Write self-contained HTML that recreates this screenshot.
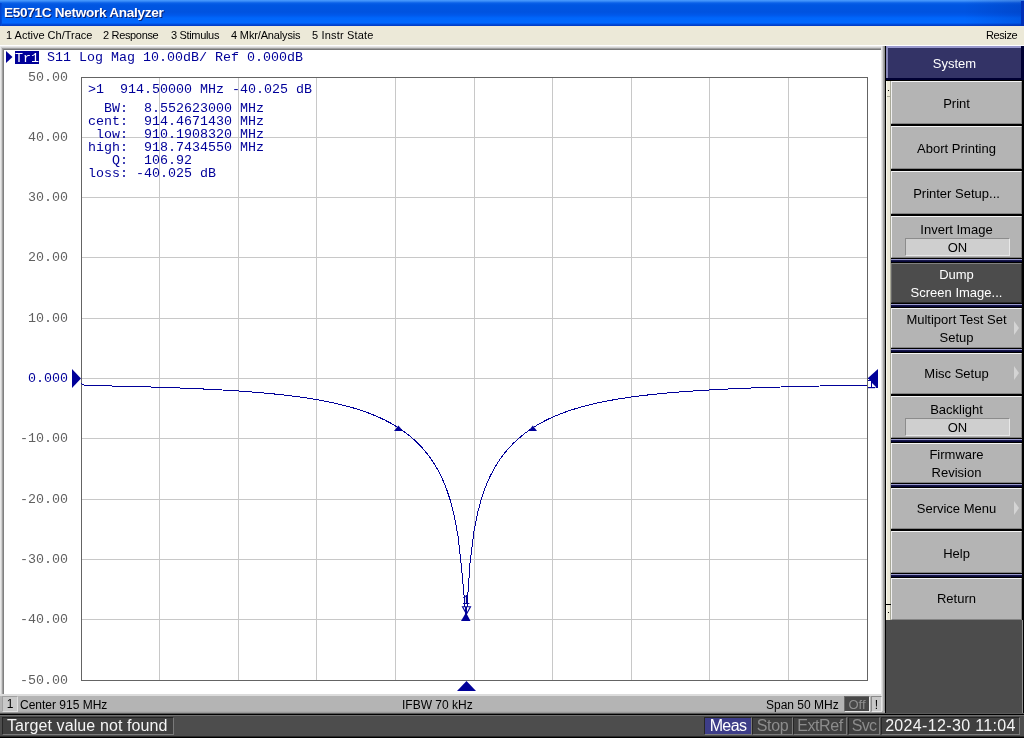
<!DOCTYPE html>
<html><head><meta charset="utf-8">
<style>
*{margin:0;padding:0;box-sizing:border-box}
html,body{width:1024px;height:738px;overflow:hidden;background:#000}
body{position:relative;font-family:"Liberation Sans",sans-serif}
.a{position:absolute}
.g{will-change:transform}
#title{left:0;top:0;width:1024px;height:26px;
background:linear-gradient(to bottom,#4a9bff 0px,#3d8ff8 1px,#0a60e8 3px,#0056e2 5px,#0053e0 12px,#0058ea 15px,#0066fb 18px,#0068ff 23px,#0050e0 24px,#0038c0 26px)}
#title span{position:absolute;left:4px;top:5px;color:#fff;font-weight:bold;font-size:13.6px;letter-spacing:-0.3px;line-height:16px;text-shadow:1px 1px 0 #0a1e6e}
#menu{left:0;top:26px;width:1024px;height:19px;background:#ece9d8;font-size:11px;color:#000}
#menu span{position:absolute;top:3px;line-height:13px;white-space:nowrap}
.sk{position:absolute;left:891px;width:131px;background:#b4b4b4;
 border-top:1px solid #f4f4f4;border-left:1px solid #f0f0f0;border-right:1px solid #848484;border-bottom:1px solid #848484}
.st{position:absolute;left:891px;width:131px;text-align:center;white-space:nowrap;font-size:13px;line-height:16px;color:#000}
.on{position:absolute;left:905px;width:105px;height:18px;background:#cfcfcf;border-top:1px solid #8c8c8c;border-left:1px solid #8c8c8c;border-right:1px solid #e8e8e8;border-bottom:1px solid #e8e8e8;font-size:13px;line-height:17px;text-align:center;color:#000}
.arr{position:absolute;left:1014px;width:0;height:0;border-top:7px solid transparent;border-bottom:7px solid transparent;border-left:5px solid #d4d4d4}
.nsep{position:absolute;left:891px;width:131px;height:5px;background:linear-gradient(to bottom,#000 0,#000 1px,#9999cc 1px,#9999cc 2px,#202050 2px,#000033 4px,#000 4px)}
svg text{font-family:"Liberation Mono",monospace;font-size:13.33px}
.bb{position:absolute;top:717px;height:18px;border-top:1px solid #262626;border-left:1px solid #262626;border-right:1px solid #7a7a7a;border-bottom:1px solid #7a7a7a;background:#404040;color:#8c8c8c;font-size:16px;line-height:16px;white-space:nowrap;text-align:center}
</style></head><body>
<div id="title" class="a"><div class="a" style="left:964px;top:0;width:60px;height:26px;background:linear-gradient(to right,rgba(0,20,120,0) 0,rgba(0,20,120,0.18) 100%)"></div><div class="a" style="left:1021px;top:1px;width:3px;height:25px;background:#0030b8"></div><div class="a" style="left:0;top:3px;width:2px;height:23px;background:linear-gradient(to right,#0040c8,#0050e0)"></div><span class="g">E5071C Network Analyzer</span></div>
<div id="menu" class="a g">
<span style="left:6px">1 Active Ch/Trace</span>
<span style="left:103px;letter-spacing:-0.33px">2 Response</span>
<span style="left:171px;letter-spacing:-0.33px">3 Stimulus</span>
<span style="left:231px;letter-spacing:-0.15px">4 Mkr/Analysis</span>
<span style="left:312px;letter-spacing:0.17px">5 Instr State</span>
<span style="left:986px;letter-spacing:-0.4px">Resize</span>
</div>
<!-- chart panel -->
<div class="a" style="left:0;top:45px;width:885px;height:668px;background:#fff"></div>
<!-- frame -->
<div class="a" style="left:0;top:45px;width:885px;height:1px;background:#fff"></div>
<div class="a" style="left:0;top:46px;width:885px;height:1px;background:#e6e6e6"></div>
<div class="a" style="left:1px;top:47px;width:882px;height:1px;background:#d0d0d0"></div>
<div class="a" style="left:2px;top:48px;width:880px;height:1px;background:#a0a0a0"></div>
<div class="a" style="left:3px;top:49px;width:878px;height:1px;background:#787878"></div>
<div class="a" style="left:0;top:46px;width:1px;height:650px;background:#e8e8e8"></div>
<div class="a" style="left:1px;top:47px;width:1px;height:649px;background:#d0d0d0"></div>
<div class="a" style="left:2px;top:48px;width:1px;height:648px;background:#a0a0a0"></div>
<div class="a" style="left:3px;top:49px;width:1px;height:646px;background:#808080"></div>
<div class="a" style="left:881px;top:46px;width:1px;height:667px;background:#e8e8e8"></div>
<div class="a" style="left:882px;top:46px;width:1px;height:667px;background:#d0d0d0"></div>
<div class="a" style="left:883px;top:46px;width:1px;height:667px;background:#a8a8a8"></div>
<div class="a" style="left:884px;top:46px;width:1px;height:667px;background:#909090"></div>
<div class="a" style="left:0;top:694px;width:881px;height:2px;background:#dcdcdc"></div>
<!-- status bar -->
<div class="a" style="left:0;top:696px;width:881px;height:16px;background:#b4b4b4"></div>
<div class="a" style="left:0;top:711px;width:885px;height:1px;background:#adadad"></div><div class="a" style="left:0;top:712px;width:885px;height:1px;background:#9a9a9a"></div>
<div class="a g" style="left:2px;top:696px;width:16px;height:16px;background:#c8c8c8;border-top:1px solid #a0a0a0;border-left:1px solid #a0a0a0;border-right:1px solid #e0e0e0;border-bottom:1px solid #e0e0e0;font-size:12px;line-height:15px;text-align:center">1</div>
<div class="a g" style="left:20px;top:698px;font-size:12px;line-height:14px">Center 915 MHz</div>
<div class="a g" style="left:402px;top:698px;font-size:12px;line-height:14px">IFBW 70 kHz</div>
<div class="a g" style="left:766px;top:698px;font-size:12px;line-height:14px">Span 50 MHz</div>
<div class="a g" style="left:844px;top:696px;width:26px;height:16px;background:#484848;color:#909090;font-size:13px;line-height:16px;text-align:center;border-top:1px solid #6a6a6a;border-left:1px solid #6a6a6a;border-right:1px solid #e8e8e8;border-bottom:1px solid #e8e8e8">Off</div>
<div class="a g" style="left:871px;top:696px;width:11px;height:16px;background:#c8c8c8;color:#000;font-size:12px;line-height:16px;text-align:center;border-top:1px solid #8a8a8a;border-left:1px solid #8a8a8a;border-right:1px solid #e8e8e8;border-bottom:1px solid #e8e8e8">!</div>

<svg class="a g" style="left:0;top:0" width="1024" height="738" viewBox="0 0 1024 738">
 <g stroke="#c8c8c8" stroke-width="1"><line x1="159.5" y1="77" x2="159.5" y2="680"/><line x1="238.5" y1="77" x2="238.5" y2="680"/><line x1="316.5" y1="77" x2="316.5" y2="680"/><line x1="395.5" y1="77" x2="395.5" y2="680"/><line x1="474.5" y1="77" x2="474.5" y2="680"/><line x1="552.5" y1="77" x2="552.5" y2="680"/><line x1="631.5" y1="77" x2="631.5" y2="680"/><line x1="709.5" y1="77" x2="709.5" y2="680"/><line x1="788.5" y1="77" x2="788.5" y2="680"/><line x1="81" y1="137.5" x2="867" y2="137.5"/><line x1="81" y1="197.5" x2="867" y2="197.5"/><line x1="81" y1="257.5" x2="867" y2="257.5"/><line x1="81" y1="318.5" x2="867" y2="318.5"/><line x1="81" y1="378.5" x2="867" y2="378.5"/><line x1="81" y1="438.5" x2="867" y2="438.5"/><line x1="81" y1="499.5" x2="867" y2="499.5"/><line x1="81" y1="559.5" x2="867" y2="559.5"/><line x1="81" y1="619.5" x2="867" y2="619.5"/></g>
 <rect x="81.5" y="77.5" width="786" height="603" fill="none" stroke="#646464" stroke-width="1"/>
 <g><text x="68" y="80.5" text-anchor="end" fill="#606060">50.00</text><text x="68" y="140.5" text-anchor="end" fill="#606060">40.00</text><text x="68" y="200.5" text-anchor="end" fill="#606060">30.00</text><text x="68" y="260.5" text-anchor="end" fill="#606060">20.00</text><text x="68" y="321.5" text-anchor="end" fill="#606060">10.00</text><text x="68" y="381.5" text-anchor="end" fill="#000099">0.000</text><text x="68" y="441.5" text-anchor="end" fill="#606060">-10.00</text><text x="68" y="502.5" text-anchor="end" fill="#606060">-20.00</text><text x="68" y="562.5" text-anchor="end" fill="#606060">-30.00</text><text x="68" y="622.5" text-anchor="end" fill="#606060">-40.00</text><text x="68" y="683.5" text-anchor="end" fill="#606060">-50.00</text></g>
 <polyline points="81.00,383.50 83.00,384.40 84.50,385.40 84.93,385.48 88.86,385.55 92.79,385.63 96.72,385.70 100.65,385.78 104.58,385.86 108.51,385.94 112.44,386.03 116.37,386.11 120.30,386.20 124.23,386.30 128.16,386.39 132.09,386.49 136.02,386.59 139.95,386.70 143.88,386.81 147.81,386.92 151.74,387.03 155.67,387.15 159.60,387.28 163.53,387.41 167.46,387.54 171.39,387.68 175.32,387.82 179.25,387.97 183.18,388.12 187.11,388.28 191.04,388.44 194.97,388.61 198.90,388.79 202.83,388.97 206.76,389.16 210.69,389.36 214.62,389.56 218.55,389.78 222.48,390.00 226.41,390.23 230.34,390.47 234.27,390.72 238.20,390.98 242.13,391.25 246.06,391.54 249.99,391.83 253.92,392.14 257.85,392.46 261.78,392.80 265.71,393.16 269.64,393.52 273.57,393.91 277.50,394.32 281.43,394.74 285.36,395.19 289.29,395.65 293.22,396.14 297.15,396.66 301.08,397.20 305.01,397.77 308.94,398.37 312.87,399.00 316.80,399.66 320.73,400.36 324.66,401.10 328.59,401.88 332.52,402.71 336.45,403.58 340.38,404.51 344.31,405.49 348.24,406.53 352.17,407.63 356.10,408.80 360.03,410.05 363.96,411.37 367.89,412.79 371.82,414.30 375.75,415.91 379.68,417.63 383.61,419.48 387.54,421.46 391.47,423.59 395.40,425.89 399.33,428.37 403.26,431.05 407.19,433.97 411.12,437.14 415.05,440.62 418.98,444.43 422.91,448.65 426.84,453.33 430.77,458.59 434.70,464.55 438.63,471.38 442.56,479.36 446.49,488.90 450.42,500.69 454.35,516.04 458.28,537.81 462.21,574.44 466.14,619.74 470.07,562.31 474.00,531.14 477.93,511.53 481.86,497.31 485.79,486.20 489.72,477.12 493.65,469.48 497.58,462.90 501.51,457.14 505.44,452.05 509.37,447.49 513.30,443.39 517.23,439.67 521.16,436.28 525.09,433.17 529.02,430.32 532.95,427.70 536.88,425.27 540.81,423.01 544.74,420.92 548.67,418.98 552.60,417.16 556.53,415.47 560.46,413.89 564.39,412.41 568.32,411.02 572.25,409.71 576.18,408.49 580.11,407.33 584.04,406.25 587.97,405.22 591.90,404.26 595.83,403.35 599.76,402.49 603.69,401.67 607.62,400.90 611.55,400.17 615.48,399.48 619.41,398.83 623.34,398.21 627.27,397.61 631.20,397.05 635.13,396.52 639.06,396.01 642.99,395.53 646.92,395.07 650.85,394.63 654.78,394.21 658.71,393.81 662.64,393.43 666.57,393.06 670.50,392.71 674.43,392.38 678.36,392.06 682.29,391.75 686.22,391.46 690.15,391.18 694.08,390.91 698.01,390.65 701.94,390.40 705.87,390.17 709.80,389.94 713.73,389.72 717.66,389.51 721.59,389.30 725.52,389.11 729.45,388.92 733.38,388.74 737.31,388.56 741.24,388.40 745.17,388.23 749.10,388.08 753.03,387.93 756.96,387.78 760.89,387.64 764.82,387.50 768.75,387.37 772.68,387.25 776.61,387.12 780.54,387.00 784.47,386.89 788.40,386.78 792.33,386.67 796.26,386.57 800.19,386.46 804.12,386.37 808.05,386.27 811.98,386.18 815.91,386.09 819.84,386.00 823.77,385.92 827.70,385.84 831.63,385.76 835.56,385.68 839.49,385.61 843.42,385.54 847.35,385.46 851.28,385.40 855.21,385.33 859.14,385.26 863.07,385.20 867.00,385.14" fill="none" stroke="#000099" stroke-width="1" shape-rendering="crispEdges"/>
 <!-- header -->
 <polygon points="6,51 12.5,57 6,63" fill="#000099"/>
 <rect x="15" y="51" width="24" height="13" fill="#000099"/>
 <text x="15" y="62" fill="#fff">Tr1</text>
 <text x="47" y="61" fill="#000099">S11 Log Mag 10.00dB/ Ref 0.000dB</text>
 <g fill="#000099"><text x="88" y="92.5" xml:space="preserve">&gt;1  914.50000 MHz -40.025 dB</text><text x="88" y="111.5" xml:space="preserve">  BW:  8.552623000 MHz</text><text x="88" y="124.5" xml:space="preserve">cent:  914.4671430 MHz</text><text x="88" y="137.5" xml:space="preserve"> low:  910.1908320 MHz</text><text x="88" y="150.5" xml:space="preserve">high:  918.7434550 MHz</text><text x="88" y="163.5" xml:space="preserve">   Q:  106.92</text><text x="88" y="176.5" xml:space="preserve">loss: -40.025 dB</text></g>
 <!-- ref markers -->
 <polygon points="72,369 81,378.5 72,388" fill="#000099"/>
 <polygon points="878,369 868,378 868,388 878,388" fill="#000099"/>
 <polygon points="875,388 868,388 868,387.5 875,387.5" fill="#fff"/>
 <rect x="868" y="379" width="1.2" height="1" fill="#fff"/>
 <rect x="868" y="381" width="3" height="6" fill="#fff"/>
 <polygon points="872,383 872,387 876,387" fill="#fff"/>
 <polygon points="875,387 876.5,388.2 875,388.2" fill="#fff"/>
 <rect x="868" y="387" width="7" height="1.2" fill="#000099"/>
 <!-- bw markers -->
 <polygon points="398.4,425.5 394,431 403,431" fill="#000099"/>
 <polygon points="532.8,425.5 528.5,431 537,431" fill="#000099"/>
 <!-- marker 1 -->
 <polygon points="466,612.5 461,621 470.5,621" fill="#000099"/>
 <polygon points="462.5,606.8 470.5,606.8 466.5,614" fill="none" stroke="#000099" stroke-width="1.1"/>
 <text x="462" y="604" fill="#000099">1</text>
 <!-- stimulus marker -->
 <polygon points="466.5,681 457,691 476,691" fill="#000099"/>
</svg>

<!-- softkey panel -->
<div class="a" style="left:885px;top:45px;width:139px;height:668px;background:#000"></div>
<div class="a" style="left:885px;top:45px;width:139px;height:1px;background:#fff"></div>
<div class="a" style="left:886px;top:46px;width:135px;height:32px;background:#333366;border-top:2px solid #9999cc;border-left:2px solid #8888bb"></div>
<div class="a g" style="left:887px;top:56px;width:135px;color:#fff;font-size:13px;line-height:16px;text-align:center">System</div>
<div class="a" style="left:886px;top:78px;width:138px;height:2px;background:#000033"></div>
<div class="a" style="left:1021px;top:46px;width:3px;height:32px;background:#000033"></div>
<div class="a" style="left:886px;top:81px;width:5px;height:539px;background:#ece9d8;border-left:1px solid #f8f8f0;border-right:1px solid #a8a898"></div>

<div class="a" style="left:888px;top:90px;width:1px;height:1px;background:#000"></div>
<div class="a" style="left:887px;top:96px;width:3px;height:1px;background:#a8a898"></div>
<div class="a" style="left:886px;top:604px;width:5px;height:1px;background:#000"></div>
<div class="a" style="left:888px;top:612px;width:1px;height:1px;background:#000"></div>
<div class="sk" style="top:81px;height:43px"></div>
<div class="sk" style="top:126px;height:43px"></div>
<div class="sk" style="top:171px;height:43px"></div>
<div class="sk" style="top:216px;height:42px"></div>
<div class="nsep" style="top:258px"></div>
<div class="sk" style="top:263px;height:40px;background:#4c4c4c;border-top-color:#808080;border-left-color:#6a6a6a;border-right-color:#2a2a2a;border-bottom-color:#2a2a2a"></div>
<div class="nsep" style="top:303px"></div>
<div class="sk" style="top:308px;height:40px"></div>
<div class="nsep" style="top:348px"></div>
<div class="sk" style="top:353px;height:41px"></div>
<div class="sk" style="top:396px;height:42px"></div>
<div class="nsep" style="top:438px"></div>
<div class="sk" style="top:443px;height:40px"></div>
<div class="nsep" style="top:483px"></div>
<div class="sk" style="top:488px;height:41px"></div>
<div class="sk" style="top:531px;height:42px"></div>
<div class="nsep" style="top:573px"></div>
<div class="sk" style="top:578px;height:42px"></div>

<div class="g">
<div class="st" style="top:96px">Print</div>
<div class="st" style="top:141px">Abort Printing</div>
<div class="st" style="top:186px">Printer Setup...</div>
<div class="st" style="top:222px">Invert Image</div>
<div class="on" style="top:238px">ON</div>
<div class="st" style="top:267px;color:#fff">Dump</div>
<div class="st" style="top:285px;color:#fff">Screen Image...</div>
<div class="st" style="top:312px">Multiport Test Set</div>
<div class="st" style="top:330px">Setup</div>
<div class="arr" style="top:321px"></div>
<div class="st" style="top:366px">Misc Setup</div>
<div class="arr" style="top:366px"></div>
<div class="st" style="top:402px">Backlight</div>
<div class="on" style="top:418px">ON</div>
<div class="st" style="top:447px">Firmware</div>
<div class="st" style="top:465px">Revision</div>
<div class="st" style="top:501px">Service Menu</div>
<div class="arr" style="top:501px"></div>
<div class="st" style="top:546px">Help</div>
<div class="st" style="top:591px">Return</div>
</div>
<div class="a" style="left:886px;top:620px;width:137px;height:94px;background:#4c4c4c;border-right:1px solid #8c8c8c;border-bottom:1px solid #8c8c8c"></div>

<!-- bottom bar -->
<div class="a" style="left:0;top:713px;width:1024px;height:25px;background:linear-gradient(to bottom,#5a5a5a 0,#5a5a5a 1px,#000 1px,#000 2px,#707070 2px,#707070 3px,#4d4d4d 3px,#4d4d4d 23px,#2a2a2a 23px,#2a2a2a 24px,#000 24px)"></div>
<div class="g">
<div class="bb" style="left:2px;width:172px;color:#f4f4f4;text-align:left;padding-left:4px;font-size:16px;letter-spacing:0.1px">Target value not found</div>
<div class="bb" style="left:704px;width:48px;background:#3d3d88;color:#fff;letter-spacing:-0.6px">Meas</div>
<div class="bb" style="left:752px;width:41px;letter-spacing:-0.3px">Stop</div>
<div class="bb" style="left:793px;width:54px;letter-spacing:-0.4px">ExtRef</div>
<div class="bb" style="left:848px;width:32px;letter-spacing:-0.8px">Svc</div>
<div class="bb" style="left:881px;width:139px;color:#f4f4f4;letter-spacing:0.35px">2024-12-30 11:04</div>
</div>
</body></html>
